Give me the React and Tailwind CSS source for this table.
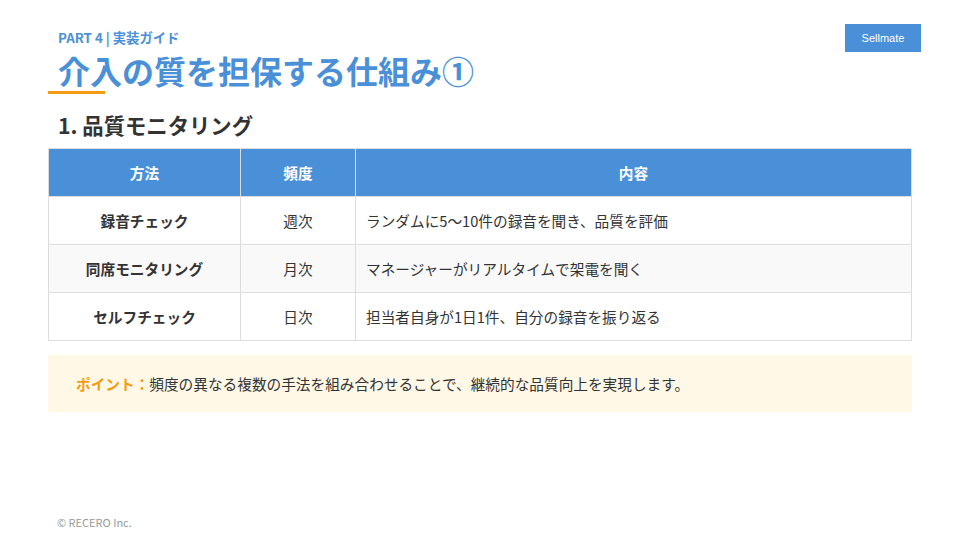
import React from 'react';

const rows = [
  { method: '録音チェック', freq: '週次', detail: 'ランダムに5〜10件の録音を聞き、品質を評価' },
  { method: '同席モニタリング', freq: '月次', detail: 'マネージャーがリアルタイムで架電を聞く' },
  { method: 'セルフチェック', freq: '日次', detail: '担当者自身が1日1件、自分の録音を振り返る' },
];

const App = () => {
  return (
    <div
      className="w-[960px] h-[540px] bg-white relative overflow-hidden text-[#333]"
      style={{ fontFamily: '"Noto Sans CJK JP", "Noto Sans", sans-serif' }}
    >
      {/* Brand badge */}
      <div
        className="absolute top-[24px] left-[845px] w-[76px] h-[28px] bg-[#4a90d9] text-white text-[11px] flex items-center justify-center"
        style={{ fontFamily: '"Liberation Sans", Arial, sans-serif' }}
      >
        Sellmate
      </div>

      <div className="flex flex-col px-[48px] pt-[28px]">
        <div className="pl-[10px] text-[13.33px] font-bold text-[#4a90d9] leading-[20px]">PART 4 | 実装ガイド</div>
        <h1 className="pl-[10px] text-[32px] font-bold text-[#4a90d9] leading-[40px] mt-[2px]">介入の質を担保する仕組み①</h1>
        <div className="w-[57px] h-[3px] bg-[#f39c12] mt-[1px]" />
        <h2 className="pl-[10px] text-[21.33px] font-bold text-[#333] leading-[30px] mt-[16px]">1. 品質モニタリング</h2>

        <table className="mt-[8px] w-[864px] border-collapse text-[14.67px]">
          <thead>
            <tr className="bg-[#4a90d9] text-white h-[48px]">
              <th className="w-[192px] border border-[#ddd] font-bold">方法</th>
              <th className="w-[115px] border border-[#ddd] font-bold">頻度</th>
              <th className="border border-[#ddd] font-bold">内容</th>
            </tr>
          </thead>
          <tbody>
            {rows.map((r, i) => (
              <tr key={r.method} className={`h-[48px] ${i === 1 ? 'bg-[#f9f9f9]' : 'bg-white'}`}>
                <td className="border border-[#ddd] text-center font-bold">{r.method}</td>
                <td className="border border-[#ddd] text-center">{r.freq}</td>
                <td className="border border-[#ddd] px-[10px]">{r.detail}</td>
              </tr>
            ))}
          </tbody>
        </table>

        <div className="mt-[14px] h-[57px] bg-[#fff8e6] flex items-center px-[28px] text-[14.67px]">
          <span className="font-bold text-[#f39c12]">ポイント：</span>
          <span>頻度の異なる複数の手法を組み合わせることで、継続的な品質向上を実現します。</span>
        </div>
      </div>

      <div className="absolute left-[57px] top-[514px] text-[11px] text-[#999]">© RECERO Inc.</div>
    </div>
  );
};

export default App;
